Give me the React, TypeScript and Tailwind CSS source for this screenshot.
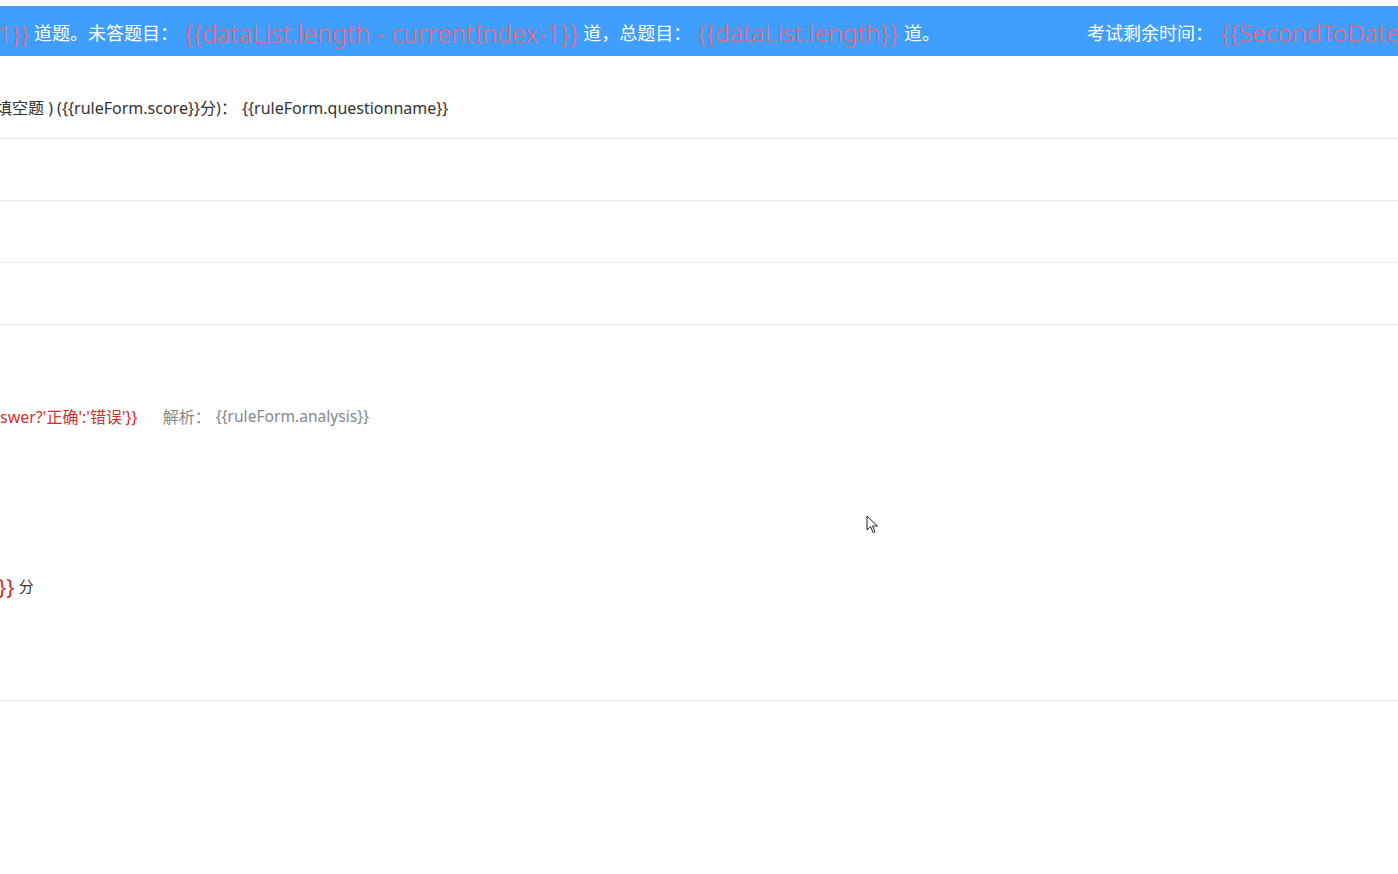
import React from "react";

export default function App() {
  return (
    <div
      className="relative w-full h-[874px] overflow-hidden bg-[#fefefe] text-[#333]"
      style={{ fontFamily: '"Noto Sans", "Noto Sans CJK SC", sans-serif' }}
    >
      <div className="h-[6px]" />
      <div className="flex h-[50px] items-center pt-[5px] bg-[#409eff] whitespace-nowrap overflow-hidden">
        <div className="flex w-[1089px] flex-none items-center ml-[-2px]">
          <span className="text-[24px] font-light text-[#f0646c]">{"1}}"}</span>
          <span className="ml-[5px] text-[18px] text-white">道题。未答题目：</span>
          <span className="ml-[6px] text-[25px] font-light text-[#f0646c]">{"{{dataList.length - currentIndex-1}}"}</span>
          <span className="ml-[5px] text-[18px] text-white">道，总题目：</span>
          <span className="ml-[6px] text-[24.6px] font-light text-[#f0646c]">{"{{dataList.length}}"}</span>
          <span className="ml-[6px] text-[18px] text-white">道。</span>
        </div>
        <div className="flex flex-none items-center">
          <span className="text-[18px] text-white">考试剩余时间：</span>
          <span className="ml-[8px] text-[24.6px] font-light text-[#f0646c]">{"{{SecondToDate(remainingTime)}}"}</span>
        </div>
      </div>

      <div className="h-[83px] border-b border-[#ebebeb] pt-[40px] whitespace-nowrap">
        <div className="flex items-center h-[24px] ml-[-4px] text-[16px] text-[#333]">
          <span>填空题 ) ({"{{ruleForm.score}}"}分)：</span>
          <span className="ml-[5px]">{"{{ruleForm.questionname}}"}</span>
        </div>
      </div>
      <div className="h-[62px] border-b border-[#ebebeb]" />
      <div className="h-[62px] border-b border-[#ebebeb]" />
      <div className="h-[62px] border-b border-[#ebebeb]" />

      <div className="h-[376px] border-b border-[#ebebeb] pt-[80px] whitespace-nowrap">
        <div className="flex items-center h-[24px] text-[16px]">
          <span className="text-[#d2302f]">{"swer?'正确':'错误'}}"}</span>
          <span className="ml-[25px] text-[#888]">解析：</span>
          <span className="ml-[5px] text-[#888] text-[15.6px]">{"{{ruleForm.analysis}}"}</span>
        </div>
        <div className="flex items-center h-[28px] mt-[143px]">
          <span className="text-[22px] text-[#d2302f] ml-[-2px]">{"}}"}</span>
          <span className="ml-[4px] text-[15px] text-[#333]">分</span>
        </div>
      </div>

      <svg
        className="absolute left-[866px] top-[515px]"
        width="14"
        height="20"
        viewBox="0 0 14 20"
      >
        <path
          d="M1 1 L1 15 L4.5 11.5 L7 17.5 L9 16.7 L6.6 11 L11.5 11 Z"
          fill="#fff"
          stroke="#222"
          strokeWidth="1"
          strokeLinejoin="round"
        />
      </svg>
    </div>
  );
}
